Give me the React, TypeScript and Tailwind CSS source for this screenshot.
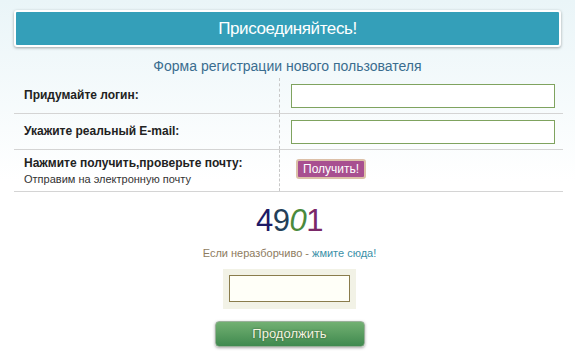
const font = { fontFamily: '"Liberation Sans", Arial, sans-serif' };

const FormRow = ({ label, hint, children, h }: { label: string; hint?: string; children: React.ReactNode; h: string }) => (
  <div className={`flex border-b border-[#d4d4d4] ${h}`}>
    <div className="w-[265px] pl-[10px] flex flex-col justify-center">
      <div className="text-[12px] font-bold text-[#222] leading-[15px]">{label}</div>
      {hint && <div className="text-[11px] text-[#333] leading-[14px] mt-[1px]">{hint}</div>}
    </div>
    <div className="flex-1 border-l border-dashed border-[#c8c8c8] flex items-center pl-[11px]">
      {children}
    </div>
  </div>
);

export default function App() {
  return (
    <div
      className="w-[575px] h-[362px] bg-gradient-to-b from-[#eaf5f8] via-white to-white px-[14px] pt-[10px] overflow-hidden"
      style={font}
    >
      {/* header */}
      <div className="h-[37px] border-2 border-white rounded-[3px] shadow-[0_1px_3px_rgba(0,0,0,0.35)] bg-[#349fb9] flex items-center justify-center">
        <span className="text-white text-[17px] tracking-[-0.4px]">Присоединяйтесь!</span>
      </div>

      <div className="text-center text-[14px] text-[#3a6d8f] mt-[11px] leading-[16px]">
        Форма регистрации нового пользователя
      </div>

      <div className="mt-[4px] w-[549px]">
        <FormRow label="Придумайте логин:" h="h-[36px]">
          <input className="w-[264px] h-[24px] border border-[#7fa35f] bg-white outline-none" />
        </FormRow>
        <FormRow label="Укажите реальный E-mail:" h="h-[36px]">
          <input className="w-[264px] h-[24px] border border-[#7fa35f] bg-white outline-none" />
        </FormRow>
        <FormRow label="Нажмите получить,проверьте почту:" hint="Отправим на электронную почту" h="h-[42px]">
          <button className="ml-[5px] mb-[4px] h-[20px] px-[5px] bg-[#a84f90] border-2 border-[#dcc0a8] rounded-[3px] text-white text-[12px] leading-[14px]">
            Получить!
          </button>
        </FormRow>
      </div>

      <div className="flex justify-center mt-[12px] ml-[4px]">
        <div className="text-[31px] leading-[34px] tracking-[-0.5px]">
          <span className="text-[#1e1a66]">4</span>
          <span className="text-[#243f5a]">9</span>
          <span className="text-[#4a8a3c] italic">0</span>
          <span className="text-[#7a2868]">1</span>
        </div>
      </div>

      <div className="text-center text-[11px] mt-[8px] leading-[14px] ml-[4px]">
        <span className="text-[#8e7c5f]">Если неразборчиво - </span>
        <span className="text-[#3a90a8]">жмите сюда!</span>
      </div>

      <div className="flex justify-center mt-[9px] ml-[4px]">
        <div className="bg-[#f2f2e6] p-[6px] w-[133px] h-[40px]">
          <input className="w-full h-[27px] border border-[#8a7c4c] bg-[#fffff8] outline-none" />
        </div>
      </div>

      <div className="flex justify-center mt-[12px] ml-[4px]">
        <button className="w-[150px] h-[26px] rounded-[4px] border border-[#9ab09a] bg-gradient-to-b from-[#72b072] to-[#3f8a4f] shadow-[0_1px_3px_rgba(0,0,0,0.35)] text-[#f3f5e0] text-[13px] [text-shadow:0_0_2px_rgba(30,60,30,0.8)]">
          Продолжить
        </button>
      </div>
    </div>
  );
}
